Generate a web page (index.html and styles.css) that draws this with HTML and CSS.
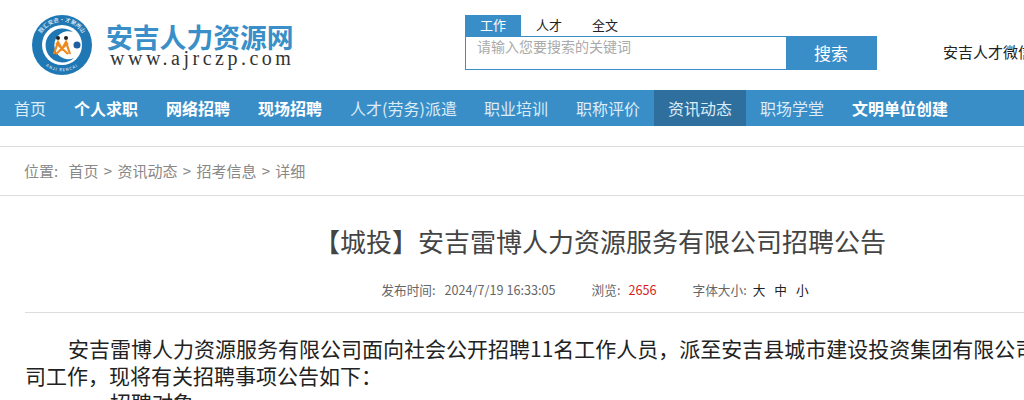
FILE: index.html
```html
<!DOCTYPE html>
<html lang="zh-CN">
<head>
    <meta charset="UTF-8">
    <title>安吉人力资源网</title>
    <link rel="stylesheet" href="styles.css">
</head>
<body>
    <div class="page">
        <div class="header">
            <a class="logo">
                <svg class="logo-mark" width="64" height="64" viewBox="0 0 64 64">
                    <defs>
                        <path id="ring-top" d="M9 37 A23.500 23.500 0 1 1 55 37"/>
                        <path id="ring-bottom" d="M5 36 A27.500 27.500 0 0 0 59 36"/>
                    </defs>
                    <circle cx="32" cy="32" r="30" fill="#1f78b4"/>
                    <circle cx="32" cy="32" r="20" fill="#fff"/>
                    <text class="ring-text"><textPath href="#ring-top" startOffset="50%" text-anchor="middle">融汇安吉·才聚两山</textPath></text>
                    <text class="ring-text small"><textPath href="#ring-bottom" startOffset="50%" text-anchor="middle">ANJI RENCAI</textPath></text>
                    <path d="M43 19 A17 17 0 1 0 44 45 A14 14 0 1 1 43 19 Z" fill="#1f78b4"/>
                    <circle cx="47" cy="32" r="3.500" fill="#1f5f9f"/>
                    <circle cx="28" cy="25" r="2" fill="#222"/>
                    <circle cx="36" cy="25" r="2" fill="#222"/>
                    <path d="M24 41 L28 29 L32 36 L36 29 L40 41 M26 30 L38 41 M38 30 L26 41" fill="none" stroke="#ee8a1d" stroke-width="2.200"/>
                </svg>
                <div class="logo-text">
                    <div class="logo-name">安吉人力资源网</div>
                    <div class="logo-url">www.ajrczp.com</div>
                </div>
            </a>
            <div class="search">
                <div class="search-tabs">
                    <span class="search-tab active">工作</span>
                    <span class="search-tab">人才</span>
                    <span class="search-tab">全文</span>
                </div>
                <div class="search-box">
                    <div class="search-input">请输入您要搜索的关键词</div>
                    <button class="search-button">搜索</button>
                </div>
            </div>
            <div class="weixin">安吉人才微信</div>
        </div>

        <div class="nav">
            <a class="nav-item">首页</a>
            <a class="nav-item bold">个人求职</a>
            <a class="nav-item bold">网络招聘</a>
            <a class="nav-item bold">现场招聘</a>
            <a class="nav-item narrow">人才(劳务)派遣</a>
            <a class="nav-item">职业培训</a>
            <a class="nav-item">职称评价</a>
            <a class="nav-item current">资讯动态</a>
            <a class="nav-item">职场学堂</a>
            <a class="nav-item bold">文明单位创建</a>
        </div>

        <div class="crumbs">
            <span class="crumbs-label">位置:</span>
            <a>首页</a><span class="sep">&gt;</span><a>资讯动态</a><span class="sep">&gt;</span><a>招考信息</a><span class="sep">&gt;</span><a>详细</a>
        </div>

        <div class="article">
            <h1 class="article-title">【城投】安吉雷博人力资源服务有限公司招聘公告</h1>
            <div class="article-meta">
                <span class="meta-label">发布时间:</span>
                <span class="meta-date">2024/7/19 16:33:05</span>
                <span class="meta-label">浏览:</span>
                <span class="meta-count">2656</span>
                <span class="meta-label meta-label-size">字体大小:</span>
                <span class="meta-size">大</span>
                <span class="meta-size">中</span>
                <span class="meta-size">小</span>
            </div>
            <div class="article-body">
                <p>安吉雷博人力资源服务有限公司面向社会公开招聘11名工作人员，派至安吉县城市建设投资集团有限公司及其下属各子公司工作，现将有关招聘事项公告如下：</p>
                <p>一、招聘对象</p>
            </div>
        </div>
    </div>
</body>
</html>
```
FILE: styles.css
```css
html, body {
    margin: 0;
    padding: 0;
    height: 400px;
    overflow: hidden;
    background-color: #fff;
}
body {
    font-family: "Noto Sans CJK SC", "Liberation Sans", sans-serif;
}
.page {
    width: 1208px;
}
.header {
    display: flex;
    height: 90px;
}
.logo {
    display: flex;
    width: 465px;
    padding: 13px 0 0 30px;
    box-sizing: border-box;
}
.logo-mark {
    flex: none;
}
.ring-text {
    font-size: 5.500px;
    fill: #fff;
}
.ring-text.small {
    font-size: 4px;
    letter-spacing: 1px;
}
.logo-text {
    margin-left: 12px;
}
.logo-name {
    font-size: 26.800px;
    line-height: 24px;
    margin-top: 12px;
    font-weight: bold;
    color: #3a8fc8;
}
.logo-url {
    font-family: "Liberation Serif", serif;
    font-size: 20px;
    line-height: 18px;
    letter-spacing: 3.500px;
    margin-left: 4px;
    color: #333;
}
.search {
    width: 412px;
    padding-top: 15px;
}
.search-tabs {
    display: flex;
}
.search-tab {
    width: 56px;
    height: 21px;
    line-height: 20px;
    font-size: 13px;
    text-align: center;
    color: #222;
}
.search-tab.active {
    background-color: #3a8ec8;
    color: #fff;
}
.search-box {
    display: flex;
    height: 34px;
    border: 1px solid #3a8ec8;
    box-sizing: border-box;
}
.search-input {
    flex: 1;
    padding-left: 11px;
    font-size: 14px;
    line-height: 18px;
    color: #aaa;
}
.search-button {
    width: 90px;
    border: none;
    padding: 0 0 2px;
    background-color: #3a8ec8;
    color: #fff;
    font-family: inherit;
    font-size: 17px;
}
.weixin {
    margin: 40px 0 0 66px;
    font-size: 15px;
    line-height: 24px;
    color: #222;
    white-space: nowrap;
}
.nav {
    display: flex;
    height: 36px;
    background-color: #3a8ec8;
}
.nav-item {
    padding: 0 14px;
    font-size: 16px;
    line-height: 36px;
    color: #dcecf6;
    white-space: nowrap;
}
.nav-item.bold {
    font-weight: bold;
    color: #fff;
}
.nav-item.narrow {
    padding-right: 13px;
}
.nav-item.current {
    background-color: #2f6f9e;
}
.crumbs {
    margin-top: 20px;
    height: 48px;
    padding-left: 24px;
    border-top: 1px solid #ddd;
    border-bottom: 1px solid #ddd;
    font-size: 15px;
    line-height: 48px;
    color: #888;
}
.crumbs-label {
    margin-right: 7px;
}
.sep {
    margin: 0 5.300px;
}
.article {
    margin: 0 25px;
}
.article-title {
    margin: 0;
    padding-top: 25px;
    padding-right: 8px;
    font-size: 26px;
    font-weight: normal;
    line-height: 40px;
    text-align: center;
    color: #444;
}
.article-meta {
    display: flex;
    justify-content: center;
    margin-top: 17px;
    padding-right: 18px;
    height: 34px;
    border-bottom: 1px solid #ddd;
    font-size: 12.670px;
    line-height: 24px;
    color: #666;
}
.meta-date {
    margin: 0 36px 0 9px;
}
.meta-count {
    margin: 0 36px 0 8px;
    color: #d81e1e;
}
.meta-label-size {
    margin-right: -3px;
}
.meta-size {
    margin-left: 9px;
    color: #222;
}
.article-body {
    margin-right: -2px;
    padding-top: 22px;
    font-size: 21px;
    line-height: 27px;
    color: #222;
}
.article-body p {
    margin: 0;
    text-indent: 43px;
}
```
